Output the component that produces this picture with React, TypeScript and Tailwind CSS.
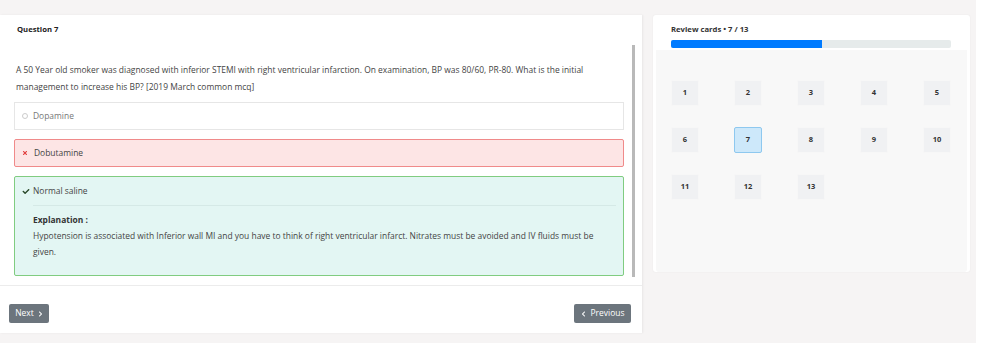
import React from "react";
import { FaCheck, FaTimes, FaChevronLeft, FaChevronRight } from "react-icons/fa";

const font = { fontFamily: '"Open Sans", "Noto Sans", sans-serif' };

function NumBox({ n, active }: { n: number; active?: boolean }) {
  return (
    <div
      className={
        "w-[28px] h-[26px] flex items-center justify-center text-[7.5px] font-bold rounded-[2px] " +
        (active
          ? "bg-[#cde8fa] border border-[#8ec8ef] text-[#333]"
          : "bg-[#f0f1f3] border border-[#f7f7f7] text-[#333]")
      }
    >
      {n}
    </div>
  );
}

export default function App() {
  const nums = Array.from({ length: 13 }, (_, i) => i + 1);
  return (
    <div className="w-[1000px] h-[343px] bg-white flex" style={font}>
      <div className="w-[976px] h-[343px] bg-[#f6f4f4] pt-[15px] flex items-start">
        {/* Left card */}
        <div className="w-[642px] h-[318px] bg-white flex flex-col shadow-[1px_0_2px_rgba(0,0,0,0.06)]">
          <div className="h-[30px] flex items-center pl-[17px] text-[7.7px] font-bold text-[#222]">
            Question 7
          </div>
          <div className="h-[240px] flex">
            <div className="w-[624px] pl-[14px] pt-[16px]">
              <p className="pl-[2px] text-[8.45px] leading-[17px] text-[#444]">
                A 50 Year old smoker was diagnosed with inferior STEMI with right ventricular infarction. On examination, BP was 80/60, PR-80. What is the initial
                <br />
                management to increase his BP? [2019 March common mcq]
              </p>
              <div className="mt-[7px] h-[28px] border border-[#e6e6e6] bg-white flex items-center pl-[7px] text-[8.45px] text-[#777]">
                <span className="w-[6px] h-[6px] rounded-full border border-[#ccc] mr-[5px]" />
                Dopamine
              </div>
              <div className="mt-[9px] h-[28px] border border-[#f08a8a] rounded-[2px] bg-[#fde5e5] flex items-center pl-[7px] text-[8.45px] text-[#444]">
                <FaTimes className="text-[#e23b3b] w-[6px] h-[6px] mr-[6px]" />
                Dobutamine
              </div>
              <div className="mt-[9px] h-[100px] border border-[#80cc80] rounded-[2px] bg-[#e3f6f3] pl-[7px] pr-[7px]">
                <div className="h-[28px] flex items-center text-[8.45px] text-[#444]">
                  <FaCheck className="text-[#2b4a2b] w-[8px] h-[7px] mr-[3px]" />
                  Normal saline
                </div>
                <div className="ml-[11px] border-t border-[#d5e9e6]" />
                <div className="ml-[11px] pt-[6px] text-[8.45px] leading-[16px] text-[#444]">
                  <div className="font-bold text-[#333]">Explanation :</div>
                  <div>
                    Hypotension is associated with Inferior wall MI and you have to think of right ventricular infarct. Nitrates must be avoided and IV fluids must be
                    <br />
                    given.
                  </div>
                </div>
              </div>
            </div>
            <div className="ml-[8px] w-[3px] h-[232px] bg-[#b9b9b9]" />
          </div>
          <div className="border-t border-[#ececec] flex-1 flex items-start justify-between pt-[18px] pl-[9px] pr-[11px]">
            <button className="h-[19px] w-[40px] bg-[#6c757d] rounded-[2px] text-white text-[8.45px] flex items-center justify-center gap-[4px]">
              Next
              <FaChevronRight className="w-[5px] h-[6px]" />
            </button>
            <button className="h-[19px] w-[57px] bg-[#6c757d] rounded-[2px] text-white text-[8.45px] flex items-center justify-center gap-[5px]">
              <FaChevronLeft className="w-[5px] h-[6px]" />
              Previous
            </button>
          </div>
        </div>

        {/* Right card */}
        <div className="ml-[11px] w-[317px] h-[257px] bg-white rounded-[3px] flex flex-col shadow-[0_0_2px_rgba(0,0,0,0.06)]">
          <div className="h-[21px] flex items-end pl-[18px] text-[7.7px] font-bold text-[#333]">
            Review cards • 7 / 13
          </div>
          <div className="mt-[4px] ml-[18px] w-[280px] h-[8px] rounded-[2px] bg-[#e6ebeb] overflow-hidden">
            <div className="h-full bg-[#007bff]" style={{ width: `${(7 / 13) * 100}%` }} />
          </div>
          <div className="mt-[2px] mx-[3px] flex-1 bg-[#f8f8f8] rounded-b-[3px] pt-[30px] pl-[15px]">
            <div className="grid grid-cols-[repeat(5,28px)] justify-between gap-y-[21px] w-[280px]">
              {nums.map((n) => (
                <NumBox key={n} n={n} active={n === 7} />
              ))}
            </div>
          </div>
        </div>
      </div>
    </div>
  );
}
